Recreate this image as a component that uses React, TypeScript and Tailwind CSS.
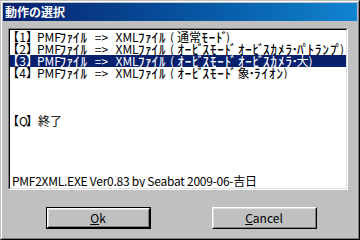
import React from "react";

const SMALL = "ｧｨｩｪｫｬｭｮｯ";

function kanaWidth(ch: string): string {
  if (ch === "ﾞ" || ch === "ﾟ") return "w-[3px]";
  if (ch === "･") return "w-[4px]";
  if (ch === "ｰ") return "w-[7px]";
  if (SMALL.includes(ch)) return "w-[6px]";
  return "w-[7.5px]";
}

function Kana({ text }: { text: string }) {
  const out: React.ReactNode[] = [];
  let buf = "";
  const flush = (k: number) => {
    if (buf) {
      out.push(<span key={"t" + k}>{buf}</span>);
      buf = "";
    }
  };
  Array.from(text).forEach((ch, i) => {
    const code = ch.charCodeAt(0);
    if (code >= 0xff61 && code <= 0xff9f) {
      flush(i);
      const w = kanaWidth(ch);
      if (ch === "ﾞ" || ch === "ﾟ") {
        out.push(
          <span key={i} className={"inline-block align-top text-[13px] font-medium " + w}>
            <span className="inline-block ml-[-1.5px]">{ch}</span>
          </span>
        );
      } else if (ch === "･") {
        out.push(
          <span key={i} className={"inline-block align-top text-[13px] font-medium " + w}>
            <span className="inline-block ml-[-1px]">{ch}</span>
          </span>
        );
      } else {
        out.push(
          <span key={i} className={"inline-block align-top text-center text-[13px] font-medium " + w}>
            {ch}
          </span>
        );
      }
    } else if (ch === " ") {
      flush(i);
      out.push(<span key={i} className="inline-block w-[3px]" />);
    } else {
      buf += ch;
    }
  });
  flush(99999);
  return <>{out}</>;
}

function Bracket({ label }: { label: string }) {
  return (
    <span className="inline-block w-[25px] whitespace-nowrap align-top">
      <span className="inline-block w-[7px] overflow-hidden align-top">
        <span className="inline-block ml-[-5px]">【</span>
      </span>
      <span className="inline-block w-[7px] text-center align-top">{label}</span>
      <span className="inline-block w-[7px] overflow-hidden align-top">
        <span className="inline-block">】</span>
      </span>
    </span>
  );
}

function Prefix({ n }: { n: string }) {
  return (
    <>
      <Bracket label={n} />
      <span className="inline-block w-[22px] align-top">PMF</span>
      <Kana text="ﾌｧｲﾙ" />
      <span className="inline-block w-[28px] text-center align-top">=&gt;</span>
      <span className="inline-block w-[22px] align-top">XML</span>
      <Kana text="ﾌｧｲﾙ" />
      <span className="inline-block w-[11px] pl-[4px] align-top">(</span>
    </>
  );
}

const rows: { n?: string; detail?: string; content?: React.ReactNode; selected?: boolean }[] = [
  { n: "1", detail: "通常ﾓｰﾄﾞ)" },
  { n: "2", detail: "ｵｰﾋﾞｽﾓｰﾄﾞ ｵｰﾋﾞｽｶﾒﾗ･ﾊﾟﾄﾗﾝﾌﾟ)" },
  { n: "3", detail: "ｵｰﾋﾞｽﾓｰﾄﾞ ｵｰﾋﾞｽｶﾒﾗ･大)", selected: true },
  { n: "4", detail: "ｵｰﾋﾞｽﾓｰﾄﾞ 象･ﾗｲｵﾝ)" },
  {},
  {},
  {},
  {
    content: (
      <>
        <Bracket label="Q" />
        <span className="ml-px">終了</span>
      </>
    ),
  },
  {},
  {},
  {},
  {},
  {
    content: (
      <span className="tracking-[-0.25px]">PMF2XML.EXE Ver0.83 by Seabat 2009-06-吉日</span>
    ),
  },
];

export default function App() {
  return (
    <div
      className="w-[360px] h-[240px] border border-t-[#c0c0c0] border-l-[#c0c0c0] border-r-black border-b-black bg-[#c0c0c0]"
      style={{ fontFamily: '"Noto Sans CJK JP", "Liberation Sans", sans-serif' }}
    >
      <div className="w-full h-full border border-t-white border-l-white border-r-[#808080] border-b-[#808080] p-px flex flex-col">
        <div className="h-[18px] bg-gradient-to-r from-[#08206e] to-[#1084d0] flex items-center pl-[2px]">
          <span className="text-white text-[12px] leading-[12px] font-bold">動作の選択</span>
        </div>
        <div className="ml-[5px] mt-[7px] w-[340px] border border-t-[#808080] border-l-[#808080] border-r-white border-b-white">
          <div className="h-[160px] border border-t-black border-l-black border-r-[#dfdfdf] border-b-[#dfdfdf] bg-white pt-px overflow-hidden">
            {rows.map((r, i) => (
              <div
                key={i}
                className={
                  "h-[12px] leading-[12px] text-[12px] pl-[2px] whitespace-nowrap overflow-hidden " +
                  (r.selected ? "bg-[#08206e] text-white" : "text-black")
                }
              >
                {r.n ? (
                  <>
                    <Prefix n={r.n} />
                    <Kana text={r.detail || ""} />
                  </>
                ) : (
                  r.content
                )}
              </div>
            ))}
          </div>
        </div>
        <div className="flex justify-center gap-[61px] mt-[17px] pl-[2px]">
          <button className="w-[105px] h-[22px] border border-black p-0 bg-[#c0c0c0]">
            <div className="w-full h-full border border-t-white border-l-white border-r-black border-b-black">
              <div className="w-full h-full border border-t-[#dfdfdf] border-l-[#dfdfdf] border-r-[#808080] border-b-[#808080] flex items-center justify-center text-[12px] text-black">
                <span><u>O</u>k</span>
              </div>
            </div>
          </button>
          <button className="w-[105px] h-[22px] p-0 bg-[#c0c0c0]">
            <div className="w-full h-full border border-t-white border-l-white border-r-black border-b-black">
              <div className="w-full h-full border border-t-[#dfdfdf] border-l-[#dfdfdf] border-r-[#808080] border-b-[#808080] flex items-center justify-center text-[12px] text-black">
                <span><u>C</u>ancel</span>
              </div>
            </div>
          </button>
        </div>
      </div>
    </div>
  );
}
